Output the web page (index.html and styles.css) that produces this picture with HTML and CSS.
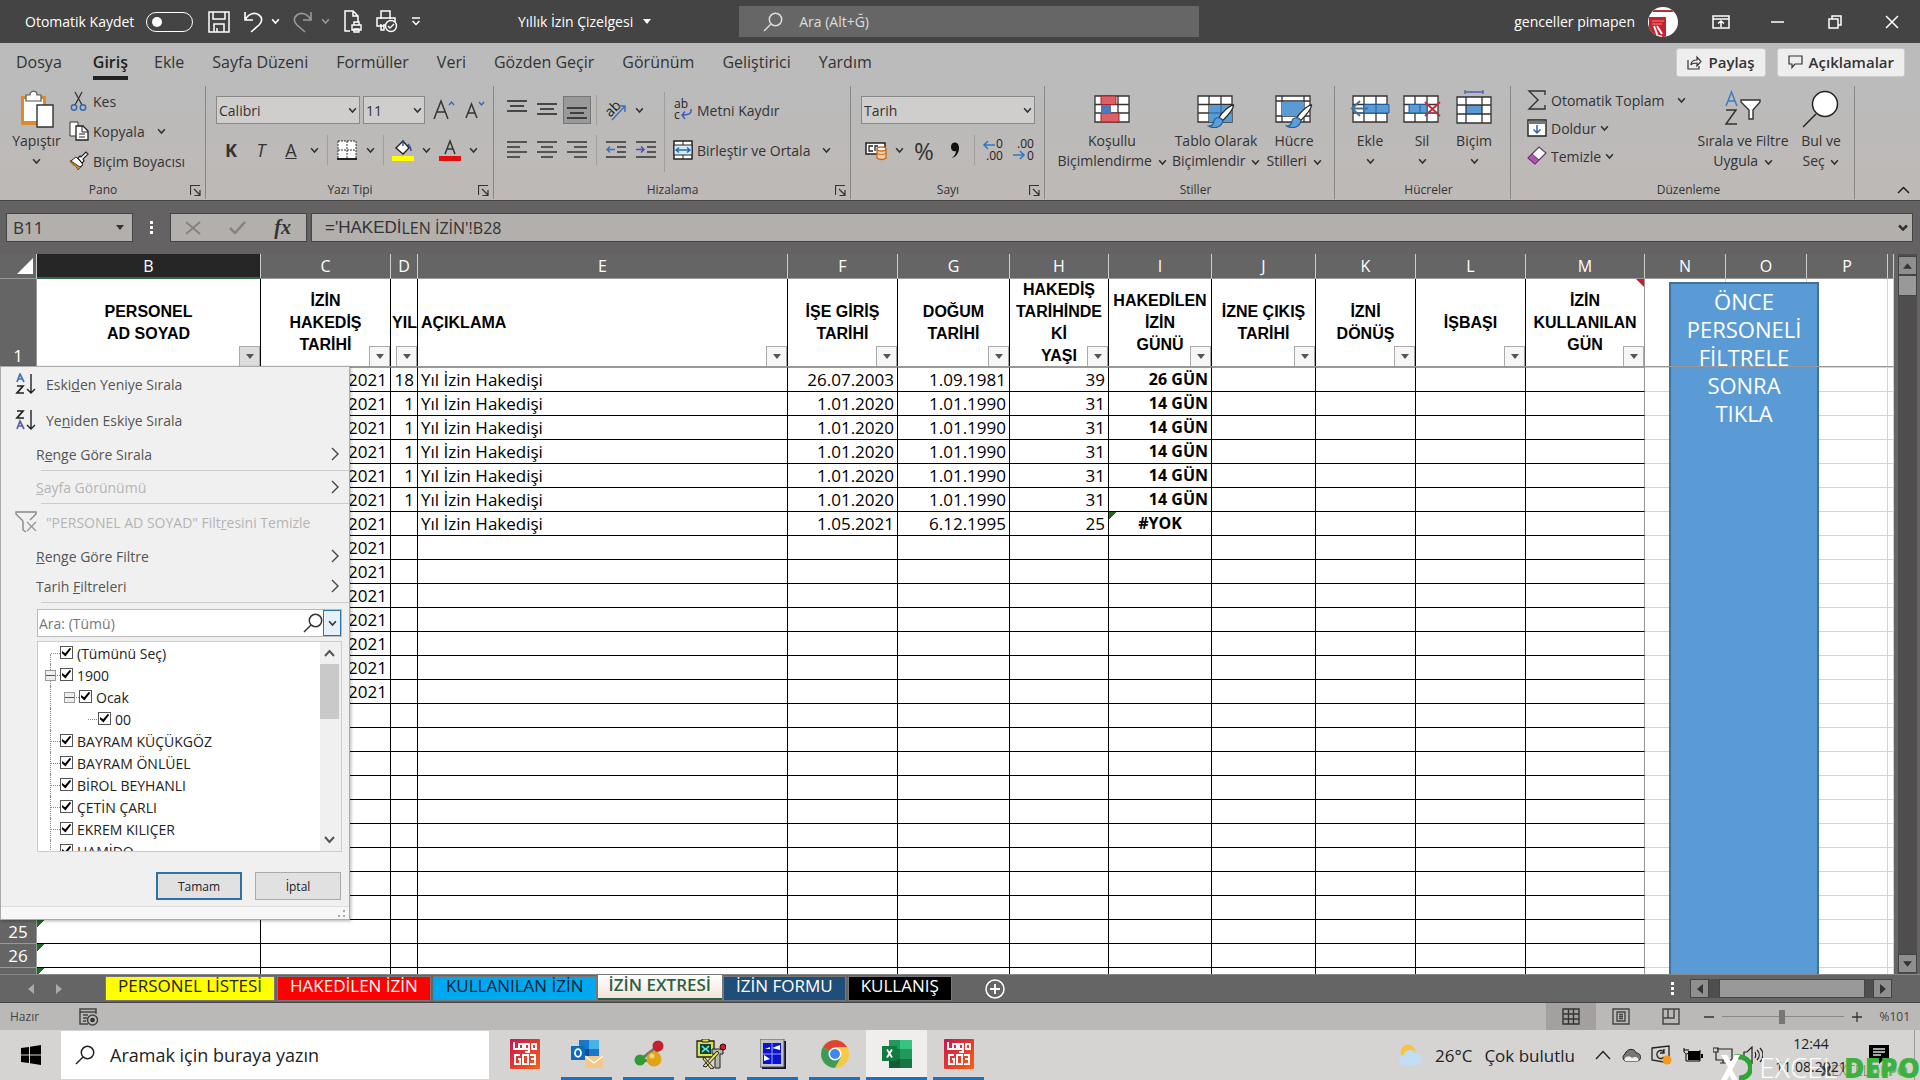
FILE: index.html
```html
<!DOCTYPE html>
<html lang="tr">
<head>
    <meta charset="UTF-8">
    <meta name="viewport" content="width=device-width, initial-scale=1.0">
    <title>Yıllık İzin Çizelgesi</title>
    <link rel="stylesheet" href="styles.css">
</head>
<body>

    <!-- Shared icons -->
    <svg class="defs" width="0" height="0" aria-hidden="true">
        <symbol id="chev" viewBox="0 0 8 6"><path d="M1 1l3 3.4L7 1" fill="none" stroke="currentColor" stroke-width="1.4"/></symbol>
        <symbol id="next" viewBox="0 0 8 14"><path d="M1 1l6 6-6 6" fill="none" stroke="currentColor" stroke-width="1.4"/></symbol>
        <symbol id="tri" viewBox="0 0 8 5"><path d="M0 0h8L4 5z" fill="currentColor"/></symbol>
        <symbol id="launch" viewBox="0 0 11 11"><path d="M.5 10V.5H10M4 4l6 6M10 5v5.500H4.500" fill="none" stroke="#333" stroke-width="1.2"/></symbol>
        <symbol id="lens" viewBox="0 0 20 20"><path d="M1 19l7-7" fill="none" stroke="currentColor" stroke-width="1.5"/><circle cx="12.500" cy="7.500" r="6.200" fill="none" stroke="currentColor" stroke-width="1.5"/></symbol>
        <symbol id="cells" viewBox="0 0 36 28"><path d="M1 1h34v26H1z" fill="#fff"/><path d="M1 1h34v26H1zM12 1v26M24 1v26M1 9.500h34M1 18h34" fill="none" stroke="#333" stroke-width="1.3"/></symbol>
        <symbol id="brush" viewBox="0 0 28 26"><path d="M27 1C22 2 14 10 12 14l4 3C20 13 27 6 27 1z" fill="#fff" stroke="#222" stroke-width="1.3"/><path d="M12 14c-5 0-5 3-6 6-1 2-3 3-5 3 5 3 14 2 15-6z" fill="#5aa0d8" stroke="#1f5c99" stroke-width="1.200"/></symbol>
        <symbol id="logo" viewBox="0 0 30 30">
            <linearGradient id="lg" x1="0" y1="0" x2="1" y2="1"><stop offset="0" stop-color="#c81450"/><stop offset="1" stop-color="#f96210"/></linearGradient>
            <rect width="30" height="30" rx="1" fill="url(#lg)"/>
            <path d="M4 3v7h4M9 5h4v5H9zM19 5h-4v5h4zM19 5v8h-4M22 5h4v5h-4zM10 16H5v9h5v-5H8M13 16h5v9h-5zM20 16h5v9h-5M21 20h4" fill="none" stroke="#fff" stroke-width="1.900"/>
        </symbol>
    </svg>

    <header class="titlebar">
        <label class="autosave">Otomatik Kaydet <input type="checkbox" class="toggle"></label>
        <div class="quick">
            <button aria-label="Kaydet"><svg width="22" height="22" viewBox="0 0 22 22"><path d="M1 1h20v20H1zM5 1v7h12V1M6 21v-8h10v8M9 21v-4" fill="none" stroke="#fff" stroke-width="1.500"/></svg></button>
            <button aria-label="Geri al"><svg width="20" height="22" viewBox="0 0 20 22"><path d="M2 1v8h8M2 9C6 2 12 1 16 4s3 7 0 10l-8 7" fill="none" stroke="#fff" stroke-width="1.600"/></svg></button>
            <svg class="chev"><use href="#chev"/></svg>
            <button aria-label="Yinele" class="dim"><svg width="20" height="22" viewBox="0 0 20 22"><path d="M18 1v8h-8M18 9C14 2 8 1 4 4s-3 7 0 10l8 7" fill="none" stroke="currentColor" stroke-width="1.600"/></svg></button>
            <svg class="chev dim"><use href="#chev"/></svg>
            <button aria-label="Baskı önizleme"><svg width="20" height="23" viewBox="0 0 20 23"><path d="M7 21H2V1h8l5 5v6M10 1v5h5" fill="none" stroke="#fff" stroke-width="1.500"/><path d="M9 15h9v5H9zM11 15v-3h5v3M11 19h5v3h-5z" fill="none" stroke="#fff" stroke-width="1.400"/></svg></button>
            <button aria-label="Yazdır"><svg width="22" height="23" viewBox="0 0 22 23"><path d="M5 9V1h9v8M8 16H1V8h18v4M8 14v6H5v-6" fill="none" stroke="#fff" stroke-width="1.500"/><circle cx="15" cy="16" r="5.500" fill="#444" stroke="#fff" stroke-width="1.400"/><path d="M12 16l2 2 4-4" fill="none" stroke="#fff" stroke-width="1.300"/></svg></button>
            <button aria-label="Özelleştir"><svg width="10" height="9" viewBox="0 0 10 9"><path d="M1 1h8M1.500 4L5 7.500 8.500 4" fill="none" stroke="#fff" stroke-width="1.400"/></svg></button>
        </div>
        <button class="doc-name">Yıllık İzin Çizelgesi <svg width="8" height="5"><use href="#tri"/></svg></button>
        <div class="title-search"><svg width="20" height="20"><use href="#lens"/></svg><input type="text" placeholder="Ara (Alt+Ğ)" aria-label="Ara"></div>
        <div class="account">
            <span>genceller pimapen</span>
            <svg width="30" height="30" viewBox="0 0 30 30"><clipPath id="av"><circle cx="15" cy="15" r="15"/></clipPath><g clip-path="url(#av)"><path d="M0 0h30v30H0z" fill="#fff"/><path d="M5 3h20v2H5z" fill="#a33"/><path d="M1 10h17v20H1z" fill="#c8202c"/><path d="M4 14h12M4 17h10" stroke="#e88" stroke-width="1"/><path d="M6 19l3 8m0-8l5 8m-6 1l6 2" stroke="#fff" stroke-width="2"/></g></svg>
        </div>
        <div class="window-buttons">
            <button aria-label="Şerit görüntüleme"><svg width="18" height="14" viewBox="0 0 18 14"><path d="M1 1h16v12H1zM1 4h16M9 12V6M6 8.500L9 6l3 2.500" fill="none" stroke="#fff" stroke-width="1.500"/></svg></button>
            <button aria-label="Simge durumuna küçült"><svg width="13" height="2"><path d="M0 1h13" stroke="#fff" stroke-width="1.500"/></svg></button>
            <button aria-label="Geri yükle"><svg width="14" height="14" viewBox="0 0 14 14"><path d="M1 4h9v9H1zM4 4V1h9v9h-3" fill="none" stroke="#fff" stroke-width="1.500"/></svg></button>
            <button aria-label="Kapat"><svg width="14" height="14" viewBox="0 0 14 14"><path d="M1 1l12 12M13 1L1 13" stroke="#fff" stroke-width="1.500"/></svg></button>
        </div>
    </header>

    <nav class="tabs">
        <a href="#">Dosya</a>
        <a href="#" class="active">Giriş</a>
        <a href="#">Ekle</a>
        <a href="#">Sayfa Düzeni</a>
        <a href="#">Formüller</a>
        <a href="#">Veri</a>
        <a href="#">Gözden Geçir</a>
        <a href="#">Görünüm</a>
        <a href="#">Geliştirici</a>
        <a href="#">Yardım</a>
        <div class="tab-actions">
            <button><svg width="15" height="15" viewBox="0 0 15 15"><path d="M1 5v9h11v-3M4 10c0-4 3-5 6-5V2l4 4.500L10 11V8C7 8 5 8 4 10z" fill="none" stroke="#333" stroke-width="1.200"/></svg>Paylaş</button>
            <button><svg width="15" height="14" viewBox="0 0 15 14"><path d="M1 1h13v8H7l-3 3.500V9H1z" fill="none" stroke="#333" stroke-width="1.200"/></svg>Açıklamalar</button>
        </div>
    </nav>

    <section class="ribbon">
        <div class="group clipboard">
            <div class="body">
                <button class="big">
                    <svg width="34" height="38" viewBox="0 0 34 38"><path d="M1 6h25v29H1z" fill="#d98b2e"/><path d="M4 9h19v22H4z" fill="#fff"/><path d="M6 8V5h4c0-5 7-5 7 0h4v6H6z" fill="#fff" stroke="#555" stroke-width="1.200"/><path d="M17 15h16v22H17z" fill="#fff" stroke="#333" stroke-width="1.400"/></svg>
                    <span>Yapıştır</span><svg class="chev"><use href="#chev"/></svg>
                </button>
                <div class="stack">
                    <button><svg width="20" height="20" viewBox="0 0 20 20"><path d="M6 1l7 13M13 1L6 14" stroke="#333" stroke-width="1.300"/><circle cx="5" cy="16.500" r="2.700" fill="none" stroke="#2f68b0" stroke-width="1.500"/><circle cx="14" cy="16.500" r="2.700" fill="none" stroke="#2f68b0" stroke-width="1.500"/></svg>Kes</button>
                    <button><svg width="20" height="20" viewBox="0 0 20 20"><path d="M1 1h8v14H1z" fill="#fff" stroke="#333"/><path d="M7 5h7l5 5v9H7z" fill="#fff" stroke="#222" stroke-width="1.300"/><path d="M13 5v6h6M10 13h6M10 16h6" fill="none" stroke="#222"/></svg>Kopyala <svg class="chev far"><use href="#chev"/></svg></button>
                    <button><svg width="20" height="20" viewBox="0 0 20 20"><path d="M1 10l7-3 6 7-5 5C7 14 4 15 1 10z" fill="#d98b2e" stroke="#7a4c14"/><path d="M2 10l5-4 7 7-3 3z" fill="#fff" stroke="#333"/><path d="M9 7l2-2 1 1 5-5 2 2-5 5 1 2-2 2z" fill="#fff" stroke="#222" stroke-width="1.200"/></svg>Biçim Boyacısı</button>
                </div>
            </div>
            <footer><span>Pano</span><svg width="11" height="11"><use href="#launch"/></svg></footer>
        </div>

        <div class="group font">
            <div class="body rows">
                <div class="row">
                    <div class="combo w-font"><select aria-label="Yazı tipi"><option>Calibri</option></select><svg class="chev"><use href="#chev"/></svg></div>
                    <div class="combo w-size"><select aria-label="Boyut"><option>11</option></select><svg class="chev"><use href="#chev"/></svg></div>
                    <button class="tool wide" aria-label="Büyüt"><svg width="22" height="20" viewBox="0 0 22 20"><path d="M1 19L8 1l7 18M4 12h8" fill="none" stroke="#333" stroke-width="1.500"/><path d="M16 5l2.500-3L21 5" fill="none" stroke="#2f68b0" stroke-width="1.300"/></svg></button>
                    <button class="tool" aria-label="Küçült"><svg width="20" height="18" viewBox="0 0 20 18"><path d="M1 17L6.500 3 12 17M3 12h7" fill="none" stroke="#333" stroke-width="1.500"/><path d="M14 1l2.500 3L19 1" fill="none" stroke="#2f68b0" stroke-width="1.300"/></svg></button>
                </div>
                <div class="row">
                    <button class="tool letter bold">K</button>
                    <button class="tool letter italic">T</button>
                    <button class="tool letter under">A</button><svg class="chev"><use href="#chev"/></svg>
                    <i class="sep"></i>
                    <button class="tool" aria-label="Kenarlık"><svg width="20" height="20" viewBox="0 0 20 20"><path d="M1 1h18v18H1z" fill="#fff"/><path d="M1 1h18v18M1 1v18M10 1v18M1 10h18" fill="none" stroke="#333" stroke-dasharray="2 1"/><path d="M0 19h20" stroke="#222" stroke-width="2"/></svg></button><svg class="chev"><use href="#chev"/></svg>
                    <i class="sep"></i>
                    <button class="tool" aria-label="Dolgu"><svg width="22" height="22" viewBox="0 0 22 22"><path d="M0 17h22v5H0z" fill="#ff0"/><path d="M4 9l7-7 6 7-6 6z" fill="#fff" stroke="#222" stroke-width="1.400"/><path d="M11 1v6M16 5c2 2 3 5 3 7" fill="none" stroke="#334f9c" stroke-width="1.500"/></svg></button><svg class="chev"><use href="#chev"/></svg>
                    <button class="tool" aria-label="Yazı rengi"><svg width="22" height="22" viewBox="0 0 22 22"><path d="M0 17h22v5H0z" fill="#e01010"/><path d="M6 15l5-13 5 13M8 10h6" fill="none" stroke="#333" stroke-width="1.500"/></svg></button><svg class="chev"><use href="#chev"/></svg>
                </div>
            </div>
            <footer><span>Yazı Tipi</span><svg width="11" height="11"><use href="#launch"/></svg></footer>
        </div>

        <div class="group align">
            <div class="body">
                <div class="rows tight">
                    <div class="row">
                        <button class="tool" aria-label="Üste hizala"><svg width="20" height="20" viewBox="0 0 20 20"><path d="M0 1h20M3 6h14M0 11h20" stroke="#222" stroke-width="1.500"/></svg></button>
                        <button class="tool" aria-label="Ortala"><svg width="20" height="20" viewBox="0 0 20 20"><path d="M0 4h20M3 9h14M0 14h20" stroke="#222" stroke-width="1.500"/></svg></button>
                        <button class="tool on" aria-label="Alta hizala"><svg width="20" height="20" viewBox="0 0 20 20"><path d="M0 8h20M3 13h14M0 18h20" stroke="#222" stroke-width="1.500"/></svg></button>
                        <i class="sep"></i>
                        <button class="tool" aria-label="Yön"><svg width="24" height="24" viewBox="0 0 24 24"><text x="1" y="17" font-size="14" transform="rotate(-45 7 12)" fill="#222">ab</text><path d="M8 22L21 8M15 8h6v6" fill="none" stroke="#3b73b9" stroke-width="1.500"/></svg></button><svg class="chev"><use href="#chev"/></svg>
                    </div>
                    <div class="row">
                        <button class="tool" aria-label="Sola hizala"><svg width="20" height="18" viewBox="0 0 20 18"><path d="M0 1h20M0 6h13M0 11h20M0 16h13" stroke="#333" stroke-width="1.500"/></svg></button>
                        <button class="tool" aria-label="Ortaya hizala"><svg width="20" height="18" viewBox="0 0 20 18"><path d="M0 1h20M4 6h12M0 11h20M4 16h12" stroke="#333" stroke-width="1.500"/></svg></button>
                        <button class="tool" aria-label="Sağa hizala"><svg width="20" height="18" viewBox="0 0 20 18"><path d="M0 1h20M7 6h13M0 11h20M7 16h13" stroke="#333" stroke-width="1.500"/></svg></button>
                        <i class="sep"></i>
                        <button class="tool" aria-label="Girintiyi azalt"><svg width="20" height="18" viewBox="0 0 20 18"><path d="M0 1h20M11 6h9M11 11h9M0 16h20" stroke="#333" stroke-width="1.500"/><path d="M9 8.500H1M4 5.500l-3 3 3 3" fill="none" stroke="#3b73b9" stroke-width="1.500"/></svg></button>
                        <button class="tool" aria-label="Girintiyi artır"><svg width="20" height="18" viewBox="0 0 20 18"><path d="M0 1h20M11 6h9M11 11h9M0 16h20" stroke="#333" stroke-width="1.500"/><path d="M0 8.500h8M5 5.500l3 3-3 3" fill="none" stroke="#4a52b9" stroke-width="1.500"/></svg></button>
                    </div>
                </div>
                <i class="sep tall"></i>
                <div class="rows">
                    <button class="row text"><svg width="20" height="22" viewBox="0 0 20 22"><text x="1" y="9" font-size="12" fill="#222">ab</text><text x="1" y="20" font-size="12" fill="#222">c</text><path d="M18 10c1 5-3 6-9 6M12 12.500L9 16l3 4" fill="none" stroke="#3b5fb9" stroke-width="1.400"/></svg>Metni Kaydır</button>
                    <button class="row text"><svg width="20" height="20" viewBox="0 0 20 20"><path d="M1 1h18v18H1z" fill="#fff" stroke="#222" stroke-width="1.500"/><path d="M1 5h18v10H1z" fill="#d5e9f8" stroke="#222"/><path d="M10 1v4M10 15v4" stroke="#222"/><path d="M3 10h14M6 7.500L3 10l3 2.500M14 7.500l3 2.500-3 2.500" fill="none" stroke="#1f6db5" stroke-width="1.500"/></svg>Birleştir ve Ortala <svg class="chev far"><use href="#chev"/></svg></button>
                </div>
            </div>
            <footer><span>Hizalama</span><svg width="11" height="11"><use href="#launch"/></svg></footer>
        </div>

        <div class="group number">
            <div class="body rows">
                <div class="row"><div class="combo w-num"><select aria-label="Sayı biçimi"><option>Tarih</option></select><svg class="chev"><use href="#chev"/></svg></div></div>
                <div class="row">
                    <button class="tool" aria-label="Para birimi"><svg width="22" height="20" viewBox="0 0 22 20"><path d="M1 3h19v11H1z" fill="#fff" stroke="#222" stroke-width="1.500"/><path d="M8 6H4v5h4M13 6h-3v5" fill="none" stroke="#222" stroke-width="1.300"/><path d="M12 9v9c2 2 7 2 9 0V9z" fill="#f2cfa4" stroke="#c56a1c" stroke-width="1.300"/><ellipse cx="16.500" cy="9" rx="4.500" ry="2" fill="#fff" stroke="#c56a1c" stroke-width="1.300"/><path d="M12 13c2 2 7 2 9 0" fill="none" stroke="#c56a1c"/></svg></button><svg class="chev"><use href="#chev"/></svg>
                    <button class="tool percent">%</button>
                    <button class="tool" aria-label="Virgül"><svg width="10" height="17" viewBox="0 0 10 17"><path d="M1 5c0-6 8-6 8 1 0 5-3 9-7 10 2-2 4-4 4-7C3 10 1 8 1 5z" fill="#111"/></svg></button>
                    <i class="sep"></i>
                    <button class="tool" aria-label="Ondalık artır"><svg width="22" height="22" viewBox="0 0 22 22"><text x="13" y="9" font-size="12" fill="#222">0</text><text x="3" y="21" font-size="12" fill="#222">.00</text><path d="M12 6H1M5 2L1 6l4 4" fill="none" stroke="#2f78c8" stroke-width="1.500"/></svg></button>
                    <button class="tool" aria-label="Ondalık azalt"><svg width="22" height="22" viewBox="0 0 22 22"><text x="4" y="9" font-size="12" fill="#222">.00</text><text x="14" y="21" font-size="12" fill="#222">0</text><path d="M0 16h11M7 12l4 4-4 4" fill="none" stroke="#2f78c8" stroke-width="1.500"/></svg></button>
                </div>
            </div>
            <footer><span>Sayı</span><svg width="11" height="11"><use href="#launch"/></svg></footer>
        </div>

        <div class="group styles">
            <div class="body">
                <button class="big"><svg width="36" height="38" viewBox="0 -5 36 38"><use href="#cells" width="36" height="28"/><path d="M7 1h15v8.500H7zM7 18h18v9H7z" fill="#dd6066" stroke="#a3262d"/><path d="M7 10h10v8H7z" fill="#4c78c0"/></svg><span>Koşullu<br>Biçimlendirme <svg class="chev"><use href="#chev"/></svg></span></button>
                <button class="big"><svg width="38" height="38" viewBox="0 -5 38 38"><use href="#cells" width="36" height="28"/><path d="M12 10h23v17H12z" fill="#5b9bd5"/><path d="M24 10v17M12 18h23" stroke="#2a6299"/><use href="#brush" x="10" y="9" width="28" height="25"/></svg><span>Tablo Olarak<br>Biçimlendir <svg class="chev"><use href="#chev"/></svg></span></button>
                <button class="big"><svg width="38" height="38" viewBox="0 -5 38 38"><path d="M1 1h34v26H1z" fill="#fff"/><path d="M1 1h34v26H1zM7 1v26M29 1v26M1 6h34M1 21h34" fill="none" stroke="#333" stroke-width="1.300"/><path d="M7 7h22v14H7z" fill="#5b9bd5"/><use href="#brush" x="10" y="9" width="28" height="25"/></svg><span>Hücre<br>Stilleri <svg class="chev"><use href="#chev"/></svg></span></button>
            </div>
            <footer><span>Stiller</span></footer>
        </div>

        <div class="group cells">
            <div class="body">
                <button class="big"><svg width="40" height="38" viewBox="-2 -5 40 38"><use href="#cells" width="36" height="28"/><path d="M12 9.500h25v8.500H12z" fill="#5b9bd5" stroke="#1f5c99"/><path d="M24 10v8" stroke="#1f5c99"/><path d="M16 13.500H0M8 6l-8 7.500L8 21" fill="none" stroke="#41719c" stroke-width="2"/></svg><span>Ekle</span><svg class="chev"><use href="#chev"/></svg></button>
                <button class="big"><svg width="38" height="38" viewBox="0 -5 38 38"><use href="#cells" width="36" height="28"/><path d="M6 9.500h18v8.500H6z" fill="#5b9bd5" stroke="#1f5c99"/><path d="M17 10v8" stroke="#1f5c99"/><path d="M22 7l15 14M37 7L22 21" stroke="#c0303a" stroke-width="2"/></svg><span>Sil</span><svg class="chev"><use href="#chev"/></svg></button>
                <button class="big"><svg width="36" height="38" viewBox="0 -5 36 38"><path d="M1 2h34v26H1z" fill="#fff"/><path d="M10 10h16v9H10z" fill="#5b9bd5"/><path d="M1 2h34v26H1zM10 2v26M26 2v26M1 10h34M1 19h34" fill="none" stroke="#333" stroke-width="1.300"/><path d="M9-3h18M9-5v4M27-5v4" stroke="#4a5cb9" stroke-width="1.300"/></svg><span>Biçim</span><svg class="chev"><use href="#chev"/></svg></button>
            </div>
            <footer><span>Hücreler</span></footer>
        </div>

        <div class="group editing">
            <div class="body">
                <div class="stack">
                    <button><svg width="20" height="20" viewBox="0 0 20 20"><path d="M18 5V1H2l9 9-9 9h16v-4" fill="none" stroke="#333" stroke-width="1.400"/></svg>Otomatik Toplam <svg class="chev far"><use href="#chev"/></svg></button>
                    <button><svg width="20" height="18" viewBox="0 0 20 18"><path d="M1 1h18v16H1z" fill="#fff" stroke="#222" stroke-width="1.400"/><path d="M1 2h18v3H1z" fill="#777"/><path d="M10 6v8M6.500 10.500L10 14l3.500-3.500" fill="none" stroke="#2f68b0" stroke-width="1.500"/></svg>Doldur <svg class="chev"><use href="#chev"/></svg></button>
                    <button><svg width="20" height="20" viewBox="0 0 20 20"><path d="M1 12L12 1l7 6L8 18z" fill="#fff" stroke="#5a3c66" stroke-width="1.200"/><path d="M1 12l4-4 7 6-4 4z" fill="#b452b4" stroke="#6b2a70"/></svg>Temizle <svg class="chev"><use href="#chev"/></svg></button>
                </div>
                <button class="big"><svg width="38" height="38" viewBox="0 0 38 38"><path d="M2 16L7.500 2 13 16M4 11h7" fill="none" stroke="#3b7cc0" stroke-width="1.500"/><path d="M2 20h10L2 34h11" fill="none" stroke="#333" stroke-width="1.500"/><path d="M17 10h19v2l-7 8v9h-4v-9l-8-8z" fill="#fff" stroke="#333" stroke-width="1.400"/></svg><span>Sırala ve Filtre<br>Uygula <svg class="chev"><use href="#chev"/></svg></span></button>
                <button class="big"><svg width="38" height="38" viewBox="0 0 38 38"><path d="M1 37l13-13" stroke="#222" stroke-width="1.500"/><circle cx="23" cy="14" r="12.500" fill="#fff" stroke="#222" stroke-width="1.500"/></svg><span>Bul ve<br>Seç <svg class="chev"><use href="#chev"/></svg></span></button>
            </div>
            <footer><span>Düzenleme</span></footer>
        </div>
        <button class="collapse" aria-label="Şeridi daralt"><svg width="13" height="8" viewBox="0 0 13 8"><path d="M1 7l5.500-5.500L12 7" fill="none" stroke="#222" stroke-width="1.500"/></svg></button>
    </section>

    <div class="formula-bar">
        <div class="name-box"><input type="text" value="B11" aria-label="Ad kutusu"><svg width="8" height="5"><use href="#tri"/></svg></div>
        <span class="dots"></span>
        <div class="fx">
            <button aria-label="İptal"><svg width="16" height="14" viewBox="0 0 16 14"><path d="M1 1l14 12M15 1L1 13" stroke="#858281" stroke-width="2"/></svg></button>
            <button aria-label="Gir"><svg width="17" height="13" viewBox="0 0 17 13"><path d="M1 7l5 5L16 1" fill="none" stroke="#858281" stroke-width="2.500"/></svg></button>
            <button class="fx-label">fx</button>
        </div>
        <div class="formula" role="textbox" aria-label="Formül"><b>='HAKEDİ</b>LEN İZİN'!B28<svg width="10" height="7" viewBox="0 0 10 7"><path d="M1 1.500l4 4 4-4" fill="none" stroke="#333" stroke-width="2.500"/></svg></div>
    </div>

    <main class="workspace">
        <div class="sheet">
            <table>
                <colgroup>
                    <col class="c-num"><col class="c-b"><col class="c-c"><col class="c-d"><col class="c-e"><col class="c-f"><col class="c-g"><col class="c-h"><col class="c-i"><col class="c-j"><col class="c-k"><col class="c-l"><col class="c-m"><col class="c-n"><col class="c-n"><col class="c-n"><col>
                </colgroup>
                <thead id="sheet-head"></thead>
                <tbody id="sheet-body"></tbody>
            </table>
            <button class="macro">ÖNCE<br>PERSONELİ<br>FİLTRELE<br>SONRA<br>TIKLA</button>
            <i class="freeze"></i>

            <!-- Filter menu of column B -->
            <div class="filter-menu">
                <button class="item tall"><svg width="22" height="22" viewBox="0 0 22 22"><path d="M2 9l3-8 4 8M3 6h5" fill="none" stroke="#3f74b5" stroke-width="1.700"/><path d="M2 13h6l-6 7h7" fill="none" stroke="#222" stroke-width="1.700"/><path d="M16 1v19M12 16l4 4 4-4" fill="none" stroke="#222" stroke-width="1.400"/></svg><span>Eski<u>d</u>en Yeniye Sırala</span></button>
                <button class="item tall"><svg width="22" height="22" viewBox="0 0 22 22"><path d="M2 2h6L2 9h7" fill="none" stroke="#222" stroke-width="1.700"/><path d="M2 20l3-8 4 8M3 17h5" fill="none" stroke="#5a5fa5" stroke-width="1.700"/><path d="M16 1v19M12 16l4 4 4-4" fill="none" stroke="#222" stroke-width="1.400"/></svg><span>Ye<u>n</u>iden Eskiye Sırala</span></button>
                <button class="item sub"><span>R<u>e</u>nge Göre Sırala</span><svg width="8" height="14"><use href="#next"/></svg></button>
                <hr>
                <button class="item sub" disabled><span><u>S</u>ayfa Görünümü</span><svg width="8" height="14"><use href="#next"/></svg></button>
                <hr>
                <button class="item tall" disabled><svg width="22" height="22" viewBox="0 0 22 22"><path d="M8 10L1 3V1h20v2l-6 6M8 10v9l3 2" fill="none" stroke="#888" stroke-width="1.400"/><path d="M12 11l9 9M21 11l-9 9" stroke="#999" stroke-width="1.400"/></svg><span>"PERSONEL AD SOYAD" Filt<u>r</u>esini Temizle</span></button>
                <button class="item sub"><span><u>R</u>enge Göre Filtre</span><svg width="8" height="14"><use href="#next"/></svg></button>
                <button class="item sub"><span>Tarih <u>F</u>iltreleri</span><svg width="8" height="14"><use href="#next"/></svg></button>
                <hr>
                <div class="menu-search">
                    <input type="text" placeholder="Ara: (Tümü)" aria-label="Ara">
                    <svg width="20" height="20"><use href="#lens"/></svg>
                    <button aria-label="Seçenekler"><svg class="chev"><use href="#chev"/></svg></button>
                </div>
                <div class="list">
                    <ul id="filter-list"></ul>
                    <div class="list-scroll">
                        <button aria-label="Yukarı"><svg width="11" height="8" viewBox="0 0 11 8"><path d="M1 7l4.500-5L10 7" fill="none" stroke="#555" stroke-width="2"/></svg></button>
                        <i></i>
                        <button aria-label="Aşağı"><svg width="11" height="8" viewBox="0 0 11 8"><path d="M1 1l4.500 5L10 1" fill="none" stroke="#555" stroke-width="2"/></svg></button>
                    </div>
                </div>
                <div class="menu-buttons"><button class="ok">Tamam</button><button>İptal</button></div>
                <div class="grip"><svg width="8" height="8" viewBox="0 0 8 8"><path d="M6 0h2v2H6zM6 5h2v2H6zM1 5h2v2H1z" fill="#aaa"/></svg></div>
            </div>
        </div>
        <div class="vscroll">
            <button aria-label="Yukarı kaydır"><svg class="flip" width="9" height="6"><use href="#tri"/></svg></button>
            <i></i>
            <button class="end" aria-label="Aşağı kaydır"><svg width="9" height="6"><use href="#tri"/></svg></button>
        </div>
    </main>

    <div class="sheet-tabs">
        <div class="nav">
            <button aria-label="Önceki"><svg width="6" height="10"><path d="M6 0v10L0 5z" fill="#aaa"/></svg></button>
            <button aria-label="Sonraki"><svg width="6" height="10"><path d="M0 0v10l6-5z" fill="#aaa"/></svg></button>
        </div>
        <button class="tab yellow">PERSONEL LİSTESİ</button>
        <button class="tab red">HAKEDİLEN İZİN</button>
        <button class="tab blue">KULLANILAN İZİN</button>
        <button class="tab current">İZİN EXTRESİ</button>
        <button class="tab navy">İZİN FORMU</button>
        <button class="tab black">KULLANIŞ</button>
        <button class="add" aria-label="Yeni sayfa"><svg width="20" height="20" viewBox="0 0 20 20"><circle cx="10" cy="10" r="9" fill="none" stroke="#fff" stroke-width="1.500"/><path d="M10 5v10M5 10h10" stroke="#fff" stroke-width="1.800"/></svg></button>
        <span class="dots"></span>
        <div class="hscroll">
            <button aria-label="Sola kaydır"><svg width="6" height="10"><path d="M6 0v10L0 5z" fill="#333"/></svg></button>
            <i></i>
            <button aria-label="Sağa kaydır"><svg width="6" height="10"><path d="M0 0v10l6-5z" fill="#333"/></svg></button>
        </div>
    </div>

    <div class="status">
        <span>Hazır</span>
        <svg class="macro-icon" width="20" height="18" viewBox="0 0 20 18"><path d="M9 16H1V1h16v5M1 4h16M4 7h5M4 10h4M4 13h3" fill="none" stroke="#444" stroke-width="1.500"/><circle cx="13.500" cy="12" r="5" fill="none" stroke="#444" stroke-width="1.500"/><circle cx="13.500" cy="12" r="2.300" fill="#333"/></svg>
        <button class="view on" aria-label="Normal"><svg width="18" height="17" viewBox="0 0 18 17"><path d="M1 1h16v15H1zM6.500 1v15M11.500 1v15M1 6h16M1 11h16" fill="none" stroke="#333" stroke-width="1.400"/></svg></button>
        <button class="view" aria-label="Sayfa düzeni"><svg width="18" height="17" viewBox="0 0 18 17"><path d="M1 1h16v15H1zM5 4h8v9H5zM7 6.500h4M7 8.500h4M7 10.500h4" fill="none" stroke="#444" stroke-width="1.400"/></svg></button>
        <button class="view" aria-label="Sayfa sonu"><svg width="18" height="17" viewBox="0 0 18 17"><path d="M1 1h16v15H1zM1 10h11V1M6 1v9" fill="none" stroke="#444" stroke-width="1.400"/></svg></button>
        <button class="zoom-btn" aria-label="Uzaklaştır"><svg width="10" height="2"><path d="M0 1h10" stroke="#333" stroke-width="1.500"/></svg></button>
        <input type="range" min="0" max="100" value="49" aria-label="Yakınlaştırma">
        <button class="zoom-btn" aria-label="Yakınlaştır"><svg width="10" height="10"><path d="M0 5h10M5 0v10" stroke="#333" stroke-width="1.300"/></svg></button>
        <span class="zoom">%101</span>
    </div>

    <footer class="taskbar">
        <button class="start" aria-label="Başlat"><svg width="20" height="20" viewBox="0 0 20 20"><path d="M0 3l8-1v7.500H0zM9 1.800L20 0v9.500H9zM0 10.500h8V18l-8-1zM9 10.500h11V20L9 18.200z" fill="#000"/></svg></button>
        <div class="task-search"><svg width="20" height="20"><use href="#lens"/></svg><input type="text" placeholder="Aramak için buraya yazın" aria-label="Arama"></div>
        <div class="apps">
            <button class="app idle" aria-label="Logo"><svg width="30" height="30"><use href="#logo"/></svg></button>
            <button class="app" aria-label="Outlook"><svg width="32" height="30" viewBox="0 0 32 30"><path d="M8 1h20v18H8z" fill="#1a78cc"/><path d="M18 1h10v9H18z" fill="#44b3ec"/><path d="M8 10h10v9H8z" fill="#0d4f98"/><path d="M14 17h18v12H14z" fill="#f3c98a"/><path d="M14 17l9 7 9-7" fill="none" stroke="#fff" stroke-width="1.300"/><path d="M0 7h14v14H0z" fill="#0f6cbd"/><ellipse cx="7" cy="14" rx="3" ry="3.800" fill="none" stroke="#fff" stroke-width="1.800"/></svg></button>
            <button class="app" aria-label="Moleküller"><svg width="30" height="28" viewBox="0 0 30 28"><path d="M6 20L24 6M6 21l14-1M24 6l-3 12" stroke="#777" stroke-width="3"/><circle cx="24" cy="6" r="5.500" fill="#c4202f"/><circle cx="6" cy="20" r="5.500" fill="#2f9b35"/><circle cx="20" cy="19" r="7.500" fill="#e0a416"/><circle cx="18" cy="16" r="2.500" fill="#f5d76a"/></svg></button>
            <button class="app" aria-label="Araçlar"><svg width="30" height="30" viewBox="0 0 30 30"><path d="M1 2h17v16H1z" fill="#dde04a" stroke="#222" stroke-width="1.300"/><path d="M6 0h7v3H6z" fill="#dde04a" stroke="#222"/><path d="M4 5h11v10H4z" fill="#143"/><path d="M6 7l3 3-3 3M13 7l-3 3 3 3" fill="none" stroke="#6ee" stroke-width="1.500"/><path d="M16 10h11v5h-3v14h-5V15h-3z" fill="#b5b5a8" stroke="#222"/><path d="M7 27L21 12l2 2L10 28zM8 18l10 11-3 1L7 20z" fill="#e5dc6a" stroke="#222"/><circle cx="27" cy="8" r="3" fill="#c22" stroke="#400"/></svg></button>
            <button class="app" aria-label="Pencere"><svg width="26" height="30" viewBox="0 0 26 30"><path d="M2 2h24v28H2z" fill="#113"/><path d="M0 0h24v28H0z" fill="#c4c4c4" stroke="#555"/><path d="M3 4h18v21H3z" fill="#0a12d8"/><path d="M12 4v21M3 15h18" stroke="#9ad" stroke-width="1"/><path d="M5 10l5-2v2zM12 9l8-3v5zM4 16l6 4-6 2z" fill="#fff"/></svg></button>
            <button class="app" aria-label="Chrome"><svg width="28" height="28" viewBox="0 0 28 28"><circle cx="14" cy="14" r="14" fill="#f7c948"/><path d="M14 14L1.900 7A14 14 0 0 1 26.100 7z" fill="#db4437"/><path d="M14 14L1.900 7A14 14 0 0 0 14 28l6-10.500z" fill="#3c9c56"/><path d="M14 7h12.100A14 14 0 0 1 14 28l6-10.500z" fill="#f7c948"/><circle cx="14" cy="14" r="6.500" fill="#fff"/><circle cx="14" cy="14" r="5" fill="#4285f4"/></svg></button>
            <button class="app open" aria-label="Excel"><svg width="30" height="28" viewBox="0 0 30 28"><path d="M7 0h23v28H7z" fill="#1f9a5b"/><path d="M18 0h12v9H18z" fill="#35c481"/><path d="M7 9h11v10H7z" fill="#137a43"/><path d="M7 19h23v9H7z" fill="#175c37"/><path d="M18 19h12v9H18z" fill="#1a7344"/><path d="M0 6h15v15H0z" fill="#107c41"/><path d="M5 9.500l5 8M10 9.500l-5 8" stroke="#fff" stroke-width="1.800"/></svg></button>
            <button class="app" aria-label="Logo"><svg width="30" height="30"><use href="#logo"/></svg></button>
        </div>
        <div class="weather">
            <svg width="24" height="22" viewBox="0 0 24 22"><circle cx="9" cy="8" r="7.500" fill="#f6c445"/><path d="M5 21a5 5 0 0 1 0-10C6 5 15 4 17 10c7-1 8 11 1 11z" fill="#c3ddf5"/></svg>
            <span>26°C</span><span>Çok bulutlu</span>
        </div>
        <div class="tray">
            <svg width="16" height="10" viewBox="0 0 16 10"><path d="M1 9l7-7.500L15 9" fill="none" stroke="#222" stroke-width="1.400"/></svg>
            <svg width="20" height="14" viewBox="0 0 20 14"><path d="M4 13a4 4 0 0 1 0-7C6 0 14 0 15 5c6 0 6 8 1 8z" fill="#777" stroke="#222"/><path d="M4 13c-2-4 4-6 7-3 4-3 8 1 6 3z" fill="#eee"/></svg>
            <svg width="22" height="20" viewBox="0 0 22 20"><path d="M1 3l17-2v17L1 15z" fill="none" stroke="#222" stroke-width="1.300"/><path d="M13 7a4 4 0 1 0 0 5M13 4v4h-4" fill="none" stroke="#222" stroke-width="1.300"/><circle cx="16" cy="15" r="4.500" fill="#f59a1b"/></svg>
            <svg width="20" height="14" viewBox="0 0 20 14"><path d="M5 3h12v9H5zM18 6h2v4h-2z" fill="#000"/><path d="M1 2h5M1 0v4c2 3 5 2 5-1M3 6v7h14V2" fill="none" stroke="#000"/></svg>
            <svg width="20" height="17" viewBox="0 0 20 17"><path d="M4 2h15v11H4M3 5v8h5M7 16h7M10 13v3M0 1h5v4H0z" fill="none" stroke="#222" stroke-width="1.200"/></svg>
            <svg width="20" height="18" viewBox="0 0 20 18"><path d="M1 6h3l5-5v16l-5-5H1zM12 6c1 2 1 4 0 6M14 4c3 3 3 7 0 10M17 2c4 4 4 10 0 14" fill="none" stroke="#222" stroke-width="1.200"/></svg>
        </div>
        <div class="clock"><span>12:44</span><span>11.08.2021</span></div>
        <button class="notify" aria-label="Bildirimler"><svg width="20" height="20" viewBox="0 0 20 20"><path d="M0 0h20v15h-6l-4 4v-4H0z" fill="#000"/><path d="M4 4h12M4 7h12M4 10h8" stroke="#ddd" stroke-width="1.300"/></svg></button>
        <i class="peek"></i>
        <div class="watermark small"><svg width="10" height="10" viewBox="0 0 10 10"><path d="M1 0l8 10M9 0L1 10" stroke="#123" stroke-width="3"/></svg>EXCEL<b>DEPO</b></div>
        <div class="watermark">
            <svg width="32" height="26" viewBox="0 0 32 26"><path d="M15 3c20-3 20 22 4 21" fill="none" stroke="#2fa336" stroke-width="5"/><path d="M1 1h6l4 7 4-7h5L7 26H1l7-13z" fill="#fff"/><path d="M11 14l7 12h-6l-4-7z" fill="#fff"/></svg>
            <span>EXCEL</span><b>DEPO</b>
        </div>
    </footer>

    <script src="script.js"></script>
</body>
</html>
```

FILE: styles.css
```css
* {
    box-sizing: border-box;
}

body {
    margin: 0;
    height: 100vh;
    display: flex;
    flex-direction: column;
    overflow: hidden;
    font-family: "Open Sans", "Noto Sans", sans-serif;
    font-size: 14px;
    color: #333;
    background: #656565;
}

button, input, select {
    font: inherit;
    color: inherit;
    background: none;
    border: 0;
    padding: 0;
    margin: 0;
    border-radius: 0;
    outline: none;
}

button {
    display: flex;
    align-items: center;
    justify-content: center;
}

svg {
    display: block;
    flex: none;
}

svg text {
    font-family: "Open Sans", sans-serif;
}

.defs {
    position: absolute;
}

.chev {
    width: 9px;
    height: 7px;
}

/* Title bar */
.titlebar {
    height: 43px;
    display: flex;
    align-items: center;
    background: #444;
    color: #fff;
}

.autosave {
    display: flex;
    align-items: center;
    gap: 12px;
    width: 208px;
    padding-left: 25px;
    white-space: nowrap;
}

.toggle {
    appearance: none;
    width: 47px;
    height: 20px;
    border: 1px solid #fff;
    border-radius: 10px;
    display: flex;
    align-items: center;
    padding-left: 5px;
}

.toggle::before {
    content: "";
    width: 10px;
    height: 10px;
    border-radius: 50%;
    background: #fff;
}

.quick {
    display: flex;
    align-items: center;
    gap: 13px;
    width: 310px;
}

.quick .chev {
    margin-left: -5px;
}

.dim {
    color: #999;
}

.doc-name {
    gap: 10px;
}

.title-search {
    margin-left: 88px;
    width: 460px;
    height: 31px;
    display: flex;
    align-items: center;
    gap: 16px;
    padding-left: 24px;
    background: #666;
    color: #ddd;
}

.title-search input {
    flex: 1;
}

input::placeholder {
    color: inherit;
    opacity: 1;
}

.account {
    margin-left: auto;
    display: flex;
    align-items: center;
    gap: 13px;
}

.window-buttons {
    display: flex;
    margin-left: 14px;
}

.window-buttons button {
    width: 57px;
    height: 43px;
}

/* Ribbon tabs */
.tabs {
    height: 38px;
    display: flex;
    align-items: center;
    gap: 28px;
    padding: 0 15px 0 16px;
    background: #bbb;
    font-size: 16px;
}

.tabs a {
    height: 36px;
    line-height: 36px;
    color: #333;
    text-decoration: none;
    white-space: nowrap;
}

.tabs .active {
    font-weight: 600;
    color: #222;
    border-bottom: 4px solid #222;
    margin: 0 -2px 0 3px;
}

.tab-actions {
    display: flex;
    gap: 11px;
    margin-left: auto;
}

.tab-actions button {
    height: 29px;
    padding: 0 10px;
    gap: 6px;
    background: #eee;
    border: 1px solid #ccc;
    border-radius: 3px;
    font-weight: 600;
    font-size: 15px;
}

/* Ribbon */
.ribbon {
    height: 120px;
    display: flex;
    background: linear-gradient(#bbb, #beb9b6);
    border-bottom: 1px solid #444;
    padding-top: 5px;
    white-space: nowrap;
}

.group {
    display: flex;
    flex-direction: column;
    margin-bottom: 1px;
    border-right: 1px solid #888;
}

.group .body {
    height: 95px;
    display: flex;
}

.group footer {
    height: 18px;
    display: flex;
    align-items: center;
    font-size: 12px;
    line-height: 18px;
    padding: 0 4px 0 16px;
}

.group footer span {
    flex: 1;
    text-align: center;
}

.clipboard { width: 206px; }
.font { width: 288px; }
.align { width: 357px; }
.number { width: 194px; }
.styles { width: 290px; }
.cells { width: 176px; }
.editing { width: 344px; }

.big {
    flex-direction: column;
    justify-content: flex-start;
    padding-top: 4px;
    gap: 3px;
    line-height: 20px;
}

.big span .chev {
    display: inline-block;
    margin-left: 2px;
}

.big > .chev {
    margin-top: 4px;
}

.clipboard .big {
    width: 69px;
    padding-left: 4px;
}

.styles .body {
    padding-left: 10px;
}

.styles .big:nth-child(1) { width: 114px; }
.styles .big:nth-child(2) { width: 94px; }
.styles .big:nth-child(3) { width: 62px; }

.cells .body {
    padding-left: 9px;
}

.cells .big {
    width: 52px;
}

.editing .stack {
    width: 186px;
    padding-left: 16px;
}

.editing .big:nth-child(2) { width: 92px; }
.editing .big:nth-child(3) { width: 64px; }

.stack {
    display: flex;
    flex-direction: column;
}

.stack button {
    height: 30px;
    gap: 4px;
    justify-content: flex-start;
}

.editing .stack button {
    height: 28px;
}

.far {
    margin-left: 8px;
}

.rows {
    display: flex;
    flex-direction: column;
}

.group .rows.body {
    flex-direction: column;
}

.rows .row {
    height: 40px;
    display: flex;
    align-items: center;
    padding-top: 8px;
}

.tool {
    width: 30px;
    height: 28px;
}

.tool.wide {
    width: 32px;
}

.tool.on {
    width: 28px;
    margin: 0 1px;
    background: #999;
    border: 1px solid #777;
}

.tool svg, .text svg {
    overflow: visible;
}

.sep {
    width: 1px;
    height: 30px;
    background: #a09d9b;
    margin: 0 4px;
}

.sep.tall {
    height: 80px;
    margin: 6px 8px 0 0;
}

.font .rows, .number .rows {
    padding-left: 10px;
}

.rows .tool + .chev {
    margin: 0 4px;
}

.letter {
    font-size: 18px;
}

.bold {
    font-weight: 700;
}

.italic {
    font-style: italic;
}

.under {
    text-decoration: underline;
}

.combo {
    position: relative;
    height: 28px;
    border: 1px solid #888;
    background: #cfcecd;
}

.combo + .combo {
    margin: 0 3px;
}

.combo select {
    appearance: none;
    width: 100%;
    height: 100%;
    padding-left: 2px;
}

.combo .chev {
    position: absolute;
    right: 2px;
    top: 10px;
}

.w-font { width: 144px; }
.w-size { width: 62px; }
.w-num { width: 174px; }

.align .tight {
    width: 170px;
    padding-left: 8px;
}

.rows .text {
    gap: 4px;
    justify-content: flex-start;
}

.percent {
    font-size: 24px;
    width: 32px;
}

.collapse {
    margin-left: auto;
    align-self: flex-end;
    width: 34px;
    height: 20px;
}

/* Formula bar */
.formula-bar {
    height: 53px;
    display: flex;
    align-items: flex-start;
    padding: 12px 7px 0 6px;
    background: #656263;
    font-size: 15px;
}

.name-box, .fx, .formula {
    height: 29px;
    display: flex;
    align-items: center;
    background: #b2afad;
    border: 1px solid #444;
}

.name-box {
    width: 127px;
    padding: 0 8px 0 6px;
    font-size: 17px;
}

.name-box input {
    flex: 1;
    min-width: 0;
}

.dots {
    width: 3px;
    height: 13px;
    background: linear-gradient(#fff 3px, transparent 3px 5px, #fff 5px 8px, transparent 8px 10px, #fff 10px);
}

.formula-bar .dots {
    margin: 8px 17px 0 17px;
}

.fx {
    width: 137px;
    justify-content: space-between;
    padding: 0 15px 0 14px;
}

.fx-label {
    font-family: "Liberation Serif", serif;
    font-style: italic;
    font-weight: 700;
    font-size: 20px;
}

.formula {
    flex: 1;
    margin-left: 4px;
    padding: 0 4px 0 13px;
    font-size: 16px;
}

.formula b {
    font-weight: 400;
    font-family: "Liberation Sans", sans-serif;
    font-size: 17px;
}

.formula svg {
    margin-left: auto;
}

/* Worksheet */
.workspace {
    flex: 1;
    min-height: 0;
    display: flex;
}

.sheet {
    position: relative;
    flex: 1;
    min-width: 0;
    overflow: hidden;
    background: #fff;
}

.sheet table {
    width: 100%;
    table-layout: fixed;
    border-collapse: separate;
    border-spacing: 0;
    color: #000;
    font-size: 17px;
}

.c-num { width: 37px; }
.c-b { width: 224px; }
.c-c { width: 130px; }
.c-d { width: 27px; }
.c-e { width: 370px; }
.c-f { width: 110px; }
.c-g { width: 112px; }
.c-h { width: 99px; }
.c-i { width: 103px; }
.c-j { width: 104px; }
.c-k { width: 100px; }
.c-l { width: 110px; }
.c-m { width: 119px; }
.c-n { width: 81px; }

.sheet th, .sheet td {
    padding: 0 3px;
    border-right: 1px solid #000;
    border-bottom: 1px solid #000;
    white-space: nowrap;
}

.sheet .letters th {
    height: 25px;
    padding: 0;
    background: #656565;
    color: #fff;
    font-size: 16px;
    font-weight: 400;
    line-height: 22px;
    border-right-color: #ccc;
    border-bottom-color: #999;
}

.sheet .letters .selected {
    background: #262626;
    border-bottom: 2px solid #2c6b4c;
}

.corner::after {
    content: "";
    display: block;
    margin-left: 17px;
    width: 16px;
    height: 16px;
    background: #fff;
    clip-path: polygon(100% 0, 100% 100%, 0 100%);
}

.sheet .titles td, .sheet .titles th {
    height: 88px;
}

.sheet .titles th {
    position: relative;
    padding: 0;
    font: bold 16px/22px "Liberation Sans", sans-serif;
    border-bottom-color: #999;
}

.sheet .titles .left {
    text-align: left;
    padding-left: 3px;
}

.sheet .titles .yil {
    text-align: right;
}

.filter-button {
    position: absolute;
    right: 0;
    bottom: 0;
    width: 21px;
    height: 21px;
    color: #555;
    background: #f6f6f6;
    border: 1px solid #aaa;
}

.filter-button.pressed {
    background: #ddd;
}

.comment {
    position: absolute;
    right: 0;
    top: 0;
    width: 8px;
    height: 8px;
    background: #c0202a;
    clip-path: polygon(0 0, 100% 0, 100% 100%);
}

.sheet .num {
    background: #656565;
    color: #fff;
    font-family: inherit;
    font-weight: 400;
    text-align: center;
    vertical-align: bottom;
    border-right-color: #999;
    border-bottom-color: #999;
}

.sheet tbody td, .sheet tbody .num {
    height: 24px;
    line-height: 23px;
}

.right {
    text-align: right;
}

.strong {
    font-weight: 700;
    font-size: 16px;
}

.center {
    text-align: center;
}

.sheet .col-m {
    border-right-color: #999;
}

.sheet .plain {
    border-color: #d4d4d4;
}

.flag {
    background: linear-gradient(135deg, #1e6b25 5px, transparent 5px);
}

.macro {
    position: absolute;
    left: 1669px;
    top: 28px;
    bottom: 0;
    width: 150px;
    padding-top: 3px;
    align-items: flex-start;
    background: #5b9bd5;
    border: 2px solid #41719c;
    border-bottom: 0;
    color: #fff;
    font-size: 22px;
    line-height: 28px;
}

.freeze {
    position: absolute;
    left: 0;
    right: 0;
    top: 112px;
    height: 1px;
    background: #999;
}

/* Filter menu */
.filter-menu {
    position: absolute;
    left: 0;
    top: 112px;
    width: 350px;
    background: #f1f0f0;
    border: 1px solid #aaa;
    box-shadow: 1px 1px 3px rgba(0, 0, 0, 0.3);
    color: #555;
}

.item {
    width: 100%;
    height: 30px;
    justify-content: flex-start;
    padding: 0 10px 0 35px;
}

.item.tall {
    height: 36px;
    gap: 9px;
    padding: 0 10px 2px 14px;
}

.item.sub {
    justify-content: space-between;
}

.item:disabled {
    color: #b4b4b4;
}

.item.sub svg {
    color: #444;
}

.filter-menu hr {
    height: 1px;
    border: 0;
    margin: 1px 0 1px 40px;
    background: #ccc;
}

.menu-search {
    display: flex;
    align-items: center;
    height: 28px;
    margin: 6px 7px 4px 36px;
    border: 1px solid #bbb;
    background: #fff;
    color: #777;
}

.menu-search input {
    flex: 1;
    min-width: 0;
    padding-left: 1px;
}

.menu-search svg {
    color: #333;
}

.menu-search button {
    width: 18px;
    height: 26px;
    background: #e5f1fb;
    border: 1px solid #2f72a8;
}

.list {
    display: flex;
    height: 211px;
    margin: 0 7px 0 36px;
    border: 1px solid #ccc;
    background: #fff;
    overflow: hidden;
    color: #222;
}

.list ul {
    flex: 1;
    margin: 0;
    padding: 0;
    list-style: none;
}

.list li {
    position: relative;
    display: flex;
    align-items: center;
    height: 22px;
    padding-left: 22px;
}

/* dotted tree lines */
.list li::before {
    content: "";
    position: absolute;
    left: 12px;
    top: 0;
    bottom: 0;
    border-left: 1px dotted #888;
}

.list li:first-child::before {
    top: 12px;
}

.list li::after {
    content: "";
    position: absolute;
    left: 13px;
    top: 11px;
    width: 9px;
    border-top: 1px dotted #888;
}

.list .level-1 { padding-left: 41px; }
.list .level-1::after { left: 32px; }
.list .level-2 { padding-left: 60px; }
.list .level-2::after { left: 50px; }

.list label {
    display: flex;
    align-items: center;
    gap: 4px;
}

.list input {
    appearance: none;
    width: 13px;
    height: 13px;
    border: 1px solid #555;
    background: #fff;
    margin-bottom: 2px;
}

.list input:checked::before {
    content: "";
    display: block;
    width: 9px;
    height: 9px;
    margin: 1px;
    background: #000;
    clip-path: polygon(0 40%, 35% 65%, 90% 0, 100% 20%, 38% 100%, 0 65%);
}

.expander {
    position: absolute;
    z-index: 1;
    left: 7px;
    top: 6px;
    width: 11px;
    height: 11px;
    border: 1px solid #999;
    background: linear-gradient(#eee 4px, #555 4px 5px, #eee 5px);
}

.level-1 .expander {
    left: 26px;
}

.list-scroll {
    width: 21px;
    padding-right: 2px;
    display: flex;
    flex-direction: column;
    background: #f0f0f0;
}

.list-scroll button {
    height: 22px;
}

.list-scroll i {
    height: 55px;
    background: #c9c9c9;
    margin-bottom: auto;
}

.menu-buttons {
    display: flex;
    justify-content: flex-end;
    gap: 13px;
    padding: 20px 8px 6px;
    font-size: 12px;
    color: #222;
}

.menu-buttons button {
    width: 86px;
    height: 28px;
    background: #e1e1e1;
    border: 1px solid #aaa;
}

.menu-buttons .ok {
    border: 2px solid #2f72a8;
}

.grip {
    height: 13px;
    display: flex;
    justify-content: flex-end;
    padding: 3px 4px 0;
    border-top: 1px solid #ddd;
    background: #f7f7f7;
}

/* Scroll bars */
.vscroll {
    width: 26px;
    display: flex;
    flex-direction: column;
    padding: 2px 3px 1px 4px;
    background: linear-gradient(90deg, #656565 4px, #4f4d4e 4px 23px, #656565 23px);
}

.vscroll button, .hscroll button {
    width: 19px;
    height: 19px;
    background: #8f8f8f;
    border: 1px solid #444;
    color: #333;
}

.vscroll i {
    height: 21px;
    background: #999;
    border: 1px solid #444;
}

.vscroll .end {
    margin-top: auto;
}

.flip {
    transform: rotate(180deg);
}

.hscroll {
    display: flex;
    align-items: center;
    width: 202px;
    background: #4f4d4e;
}

.hscroll i {
    flex: 1;
    height: 19px;
    margin: 0 8px 0 10px;
    background: #999;
    border: 1px solid #444;
}

/* Sheet tabs */
.sheet-tabs {
    height: 29px;
    display: flex;
    align-items: center;
    padding-right: 28px;
    background: #656565;
    border-top: 1px solid #888;
    border-bottom: 1px solid #444;
    font-size: 17px;
}

.nav {
    width: 104px;
    display: flex;
    gap: 22px;
    padding-left: 28px;
}

.tab {
    height: 23px;
    align-items: flex-start;
    margin: 0 2px;
    padding: 0 12px;
    line-height: 17px;
    outline: 1px solid #777;
}

.yellow { background: #ff0; color: #222; }
.red { background: #f00; color: #fff; }
.blue { background: #00a8f0; color: #123; }
.navy { background: #1f4e79; color: #fff; }
.black { background: #000; color: #fff; }

.sheet-tabs .current {
    height: 25px;
    margin: 0;
    padding: 0 11px;
    line-height: 20px;
    align-self: flex-start;
    background: linear-gradient(#fff, #f3e4dc);
    color: #2a6242;
    font-weight: 600;
    border-bottom: 2px solid #2a6242;
}

.add {
    margin-left: 32px;
}

.sheet-tabs .dots {
    margin: 0 16px 0 auto;
}

/* Status bar */
.status {
    height: 27px;
    display: flex;
    align-items: center;
    padding: 0 10px;
    background: #bbb9b7;
    font-size: 12px;
    color: #444;
}

.macro-icon {
    margin: 0 auto 0 40px;
}

.view {
    width: 50px;
    height: 27px;
}

.view.on {
    background: #a3a09f;
}

.zoom-btn {
    width: 26px;
    height: 27px;
}

.status input {
    appearance: none;
    width: 122px;
    height: 1px;
    background: #888;
}

.status input::-webkit-slider-thumb {
    appearance: none;
    width: 6px;
    height: 14px;
    background: #777;
}

.zoom {
    width: 40px;
    text-align: right;
}

/* Taskbar */
.taskbar {
    position: relative;
    height: 50px;
    display: flex;
    align-items: center;
    background: #d6d4d2;
    color: #222;
    overflow: hidden;
    white-space: nowrap;
}

.start {
    width: 61px;
    height: 50px;
}

.task-search {
    width: 428px;
    height: 48px;
    display: flex;
    align-items: center;
    gap: 15px;
    padding-left: 14px;
    background: #fff;
    font-size: 18px;
}

.task-search input {
    flex: 1;
}

.apps {
    display: flex;
    gap: 11px;
    margin-left: 10px;
}

.app {
    width: 51px;
    height: 50px;
    border-bottom: 3px solid #1a72bd;
}

.app.idle {
    border-color: transparent;
}

.app.open {
    width: 61px;
    margin: 0 -5px;
    background: #efeeec;
}

.weather {
    display: flex;
    align-items: center;
    gap: 12px;
    margin-left: auto;
    font-size: 17px;
}

.tray {
    display: flex;
    align-items: center;
    gap: 10px;
    margin-left: 20px;
}

.clock {
    width: 96px;
    display: flex;
    flex-direction: column;
    align-items: center;
    line-height: 23px;
}

.notify {
    margin: 0 25px 0 10px;
}

.peek {
    width: 6px;
    height: 50px;
    border-left: 1px solid #999;
}

/* Watermark over the tray */
.watermark {
    position: absolute;
    right: 0;
    bottom: -5px;
    display: flex;
    align-items: center;
    gap: 7px;
    font-size: 28px;
    line-height: 36px;
    font-weight: 300;
    color: #fff;
}

.watermark b {
    font-weight: 800;
    color: #3cb13f;
}

.watermark.small {
    right: 12px;
    bottom: 2px;
    gap: 0;
    font-size: 14px;
    line-height: 14px;
    color: #2d4a3a;
    opacity: 0.7;
}
```

FILE: script.js
```js
const letters = ["B", "C", "D", "E", "F", "G", "H", "I", "J", "K", "L", "M", "N", "O", "P", ""];

const titles = [
    "PERSONEL<br>AD SOYAD", "İZİN<br>HAKEDİŞ<br>TARİHİ", "YIL", "AÇIKLAMA", "İŞE GİRİŞ<br>TARİHİ",
    "DOĞUM<br>TARİHİ", "HAKEDİŞ<br>TARİHİNDE<br>Kİ<br>YAŞI", "HAKEDİLEN<br>İZİN<br>GÜNÜ", "İZNE ÇIKIŞ<br>TARİHİ",
    "İZNİ<br>DÖNÜŞ", "İŞBAŞI", "İZİN<br>KULLANILAN<br>GÜN"
];

// D, E, F, G, H, I
const leaves = [
    ["18", "Yıl İzin Hakedişi", "26.07.2003", "1.09.1981", "39", "26 GÜN"],
    ["1", "Yıl İzin Hakedişi", "1.01.2020", "1.01.1990", "31", "14 GÜN"],
    ["1", "Yıl İzin Hakedişi", "1.01.2020", "1.01.1990", "31", "14 GÜN"],
    ["1", "Yıl İzin Hakedişi", "1.01.2020", "1.01.1990", "31", "14 GÜN"],
    ["1", "Yıl İzin Hakedişi", "1.01.2020", "1.01.1990", "31", "14 GÜN"],
    ["1", "Yıl İzin Hakedişi", "1.01.2020", "1.01.1990", "31", "14 GÜN"],
    ["", "Yıl İzin Hakedişi", "1.05.2021", "6.12.1995", "25", "#YOK"]
];

const people = [
    ["(Tümünü Seç)", 0], ["1900", 0, true], ["Ocak", 1, true], ["00", 2],
    ["BAYRAM KÜÇÜKGÖZ", 0], ["BAYRAM ÖNLÜEL", 0], ["BİROL BEYHANLI", 0],
    ["ÇETİN ÇARLI", 0], ["EKREM KILIÇER", 0], ["HAMİDO", 0]
];

function buildHead() {
    let html = '<tr class="letters"><th class="corner"></th>';
    letters.forEach(l => html += `<th class="${l === "B" ? "selected" : ""}">${l}</th>`);
    html += '</tr><tr class="titles"><td class="num">1</td>';
    titles.forEach((t, i) => {
        let cls = letters[i] === "E" ? "left" : letters[i] === "D" ? "yil" : letters[i] === "M" ? "col-m" : "";
        html += `<th class="${cls}">${t}`;
        if (letters[i] === "M") html += '<i class="comment"></i>';
        html += `<button class="filter-button ${i === 0 ? "pressed" : ""}" aria-label="Filtre"><svg width="8" height="5"><use href="#tri"/></svg></button></th>`;
    });
    html += '<td class="plain"></td>'.repeat(4) + "</tr>";
    document.getElementById("sheet-head").innerHTML = html;
}

function buildRows() {
    let html = "";
    for (let r = 2; r <= 27; r++) {
        let row = leaves[r - 2] || ["", "", "", "", "", ""];
        let error = row[5] === "#YOK";
        html += `<tr><td class="num">${r}</td><td class="${r > 24 ? "flag" : ""}"></td>`;
        html += `<td class="right">${r < 16 ? "1.01.2021" : ""}</td>`;
        html += `<td class="right">${row[0]}</td><td>${row[1]}</td>`;
        html += `<td class="right">${row[2]}</td><td class="right">${row[3]}</td><td class="right">${row[4]}</td>`;
        html += `<td class="strong ${error ? "center flag" : "right"}">${row[5]}</td>`;
        html += '<td></td>'.repeat(3) + '<td class="col-m"></td>' + '<td class="plain"></td>'.repeat(4) + "</tr>";
    }
    document.getElementById("sheet-body").innerHTML = html;
}

function buildFilterList() {
    let html = "";
    people.forEach(([name, level, open]) => {
        html += `<li class="level-${level}">${open ? '<i class="expander"></i>' : ""}<label><input type="checkbox" checked>${name}</label></li>`;
    });
    document.getElementById("filter-list").innerHTML = html;
}

buildHead();
buildRows();
buildFilterList();
```
